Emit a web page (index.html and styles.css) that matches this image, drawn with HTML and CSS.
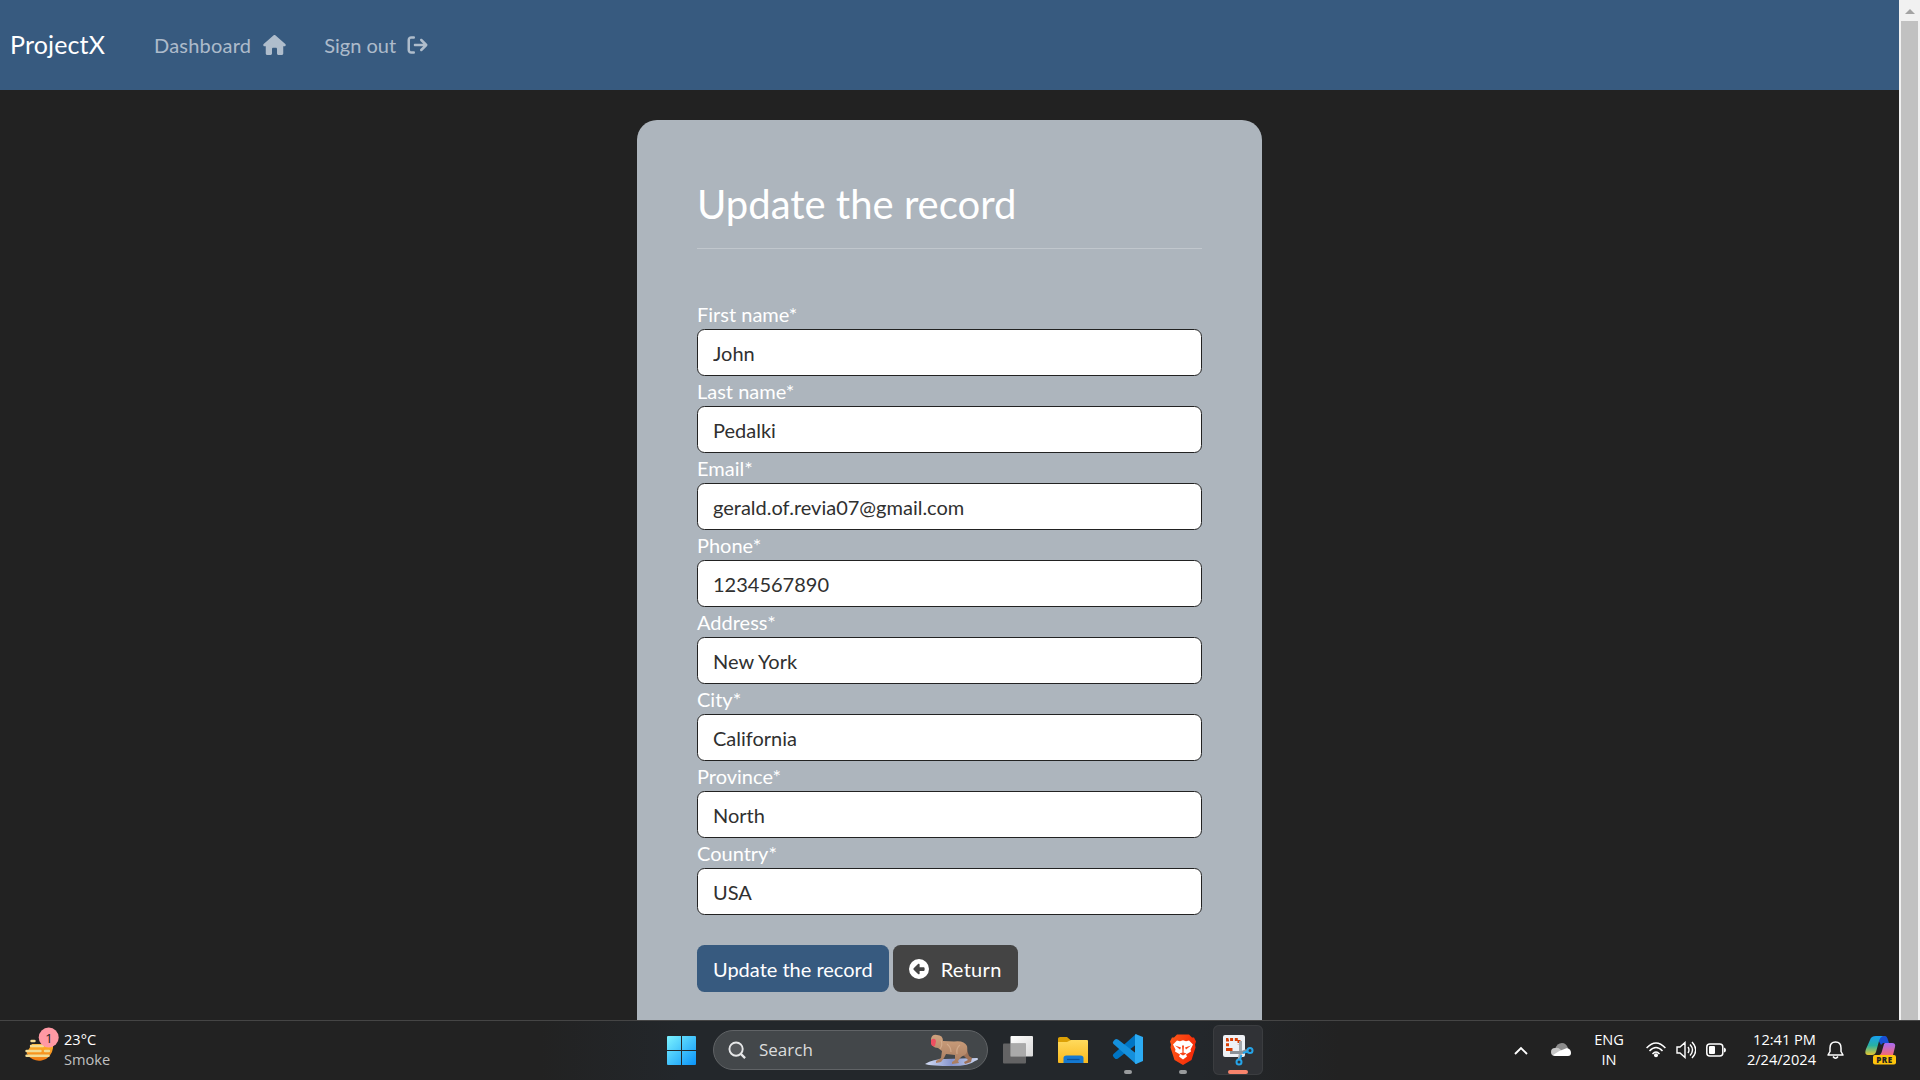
FILE: index.html
```html
<!DOCTYPE html>
<html lang="en">
<head>
<meta charset="utf-8">
<title>ProjectX</title>
<link rel="stylesheet" href="styles.css">
</head>
<body>
<div class="screen">
  <div class="viewport">
    <div class="page">
      <nav class="navbar">
        <a class="brand">ProjectX</a>
        <a class="nav-link dashboard"><span>Dashboard</span>
          <svg class="house" viewBox="0 0 576 512"><path d="M575.800 255.500c0 18-15 32.100-32 32.100h-32l.7 160.200c0 2.700-.2 5.400-.5 8.100V472c0 22.100-17.900 40-40 40H392c-22.100 0-40-17.900-40-40V360c0-17.700-14.300-32-32-32h-64c-17.700 0-32 14.300-32 32v112c0 22.100-17.900 40-40 40h-80c-22.100 0-40-17.900-40-40V287.600H32c-18 0-32-14-32-32.100c0-9 3-17 10-24L266.400 8c7-7 15-8 22-8s15 2 21 7L564.800 231.500c8 7 12 15 11 24z"/></svg>
        </a>
        <a class="nav-link signout"><span>Sign out</span>
          <svg class="exit" viewBox="0 0 512 512"><path d="M502.600 278.600c12.500-12.500 12.500-32.800 0-45.300l-128-128c-12.500-12.500-32.800-12.500-45.300 0s-12.500 32.800 0 45.300L402.700 224H192c-17.700 0-32 14.300-32 32s14.300 32 32 32h210.700l-73.400 73.400c-12.500 12.500-12.500 32.800 0 45.300s32.800 12.500 45.300 0l128-128zM160 96c17.700 0 32-14.300 32-32s-14.300-32-32-32H96C43 32 0 75 0 128v256c0 53 43 96 96 96h64c17.700 0 32-14.300 32-32s-14.300-32-32-32H96c-17.700 0-32-14.300-32-32V128c0-17.700 14.300-32 32-32h64z"/></svg>
        </a>
      </nav>
      <main class="card">
        <h1 class="title">Update the record</h1>
        <hr class="rule">
        <form class="form">
          <label class="label" for="first">First name*</label><input class="input" id="first" value="John">
          <label class="label" for="last">Last name*</label><input class="input" id="last" value="Pedalki">
          <label class="label" for="email">Email*</label><input class="input" id="email" value="gerald.of.revia07@gmail.com">
          <label class="label" for="phone">Phone*</label><input class="input" id="phone" value="1234567890">
          <label class="label" for="address">Address*</label><input class="input" id="address" value="New York">
          <label class="label" for="city">City*</label><input class="input" id="city" value="California">
          <label class="label" for="province">Province*</label><input class="input" id="province" value="North">
          <label class="label" for="country">Country*</label><input class="input" id="country" value="USA">
          <div class="actions">
            <button class="btn primary" type="button">Update the record</button>
            <button class="btn secondary" type="button"><svg class="back" viewBox="0 0 512 512"><path fill-rule="evenodd" d="M512 256A256 256 0 1 0 0 256a256 256 0 1 0 512 0zM231 127c15-15 41-4.500 41 17v64h96c17.700 0 32 14.300 32 32v32c0 17.700-14.300 32-32 32h-96v64c0 21.500-26 32-41 17L119 273c-9.400-9.400-9.400-24.600 0-34z"/></svg>Return</button>
          </div>
        </form>
      </main>
    </div>
    <div class="scrollbar"><span class="scroll-up"></span><span class="thumb"></span></div>
  </div>

  <footer class="taskbar">
    <div class="weather">
      <svg class="weather-icon" viewBox="0 0 36 38">
        <defs><linearGradient id="sun" x2="0" y2="1"><stop stop-color="#ffb52e"/><stop offset="1" stop-color="#f07a13"/></linearGradient></defs>
        <path d="M8 17h21v4a14 14 0 0 1-26.500 5z" fill="url(#sun)"/>
        <g stroke="#f2dc94" stroke-width="2.400" stroke-linecap="round"><path d="M7.500 14h3M7 19h12M2.500 24h14M21 24h4M2.500 28.800h22"/></g>
        <circle cx="24.700" cy="10.500" r="10" fill="#ff99a4"/>
        <text x="25" y="15.500" class="badge-text">1</text>
      </svg>
      <div class="stack"><span>23°C</span><span class="muted">Smoke</span></div>
    </div>

    <div class="apps">
      <svg class="start" viewBox="0 0 29 29"><defs><linearGradient id="win" x2="1" y2="1"><stop stop-color="#7cf3ff"/><stop offset="1" stop-color="#0a93f8"/></linearGradient></defs><path fill="url(#win)" d="M1 0h13v14H0V1q0-1 1-1zM15 0h13q1 0 1 1v13H15zM0 15h14v14H1q-1 0-1-1zM15 15h14v13q0 1-1 1H15z"/></svg>
      <div class="search">
        <svg class="lens" viewBox="0 0 20 20"><circle cx="8.500" cy="8.500" r="7" fill="#55585b" stroke="#e6e7e8" stroke-width="2"/><path d="M13.500 13.500l4.500 4.500" stroke="#e6e7e8" stroke-width="2.400"/></svg>
        <span>Search</span>
        <svg class="monkey" viewBox="0 0 54 32">
          <defs><linearGradient id="fur" x2="0" y2="1"><stop stop-color="#cfa27e"/><stop offset="1" stop-color="#a87c60"/></linearGradient><linearGradient id="ice" x2="1"><stop stop-color="#d5def5"/><stop offset=".5" stop-color="#8795cd"/><stop offset="1" stop-color="#cbd6f0"/></linearGradient></defs>
          <path d="M0 30q8-5 20-5l32-1q3 1-2 3-6 5-22 5Q6 32 0 30z" fill="url(#ice)"/>
          <path d="M34 12l8 4 2 6 3 2-1 4-6 2-1-2 4-2-4-4-6-3z" fill="#9d7157"/>
          <path d="M6 5Q7 0 12 1q6 0 6 6 6 0 11 .500Q39 6 42 12q1 5-1 8l-5 3-3 4 1 2-7 1v-2l3-2v-5l-9-1-2 4-3 4-5 1v-2l5-3 1-7-4-3Q6 14 6 5z" fill="url(#fur)"/>
          <path d="M6 6q4-3 5 1l-1 5q-3 1-4-2z" fill="#ee4f61"/>
          <path d="M16 6q2 5-1 9M22 10q4 3 4 8M35 11q-4 3-3 9" stroke="#e0bb9b" stroke-width="1.200" fill="none" opacity=".6"/>
        </svg>
      </div>
      <svg class="app" viewBox="-2 0 50 50"><defs><linearGradient id="pane" x2="1" y2="1"><stop stop-color="#fff"/><stop offset="1" stop-color="#d8d8d8"/></linearGradient></defs><rect x="15.500" y="11" width="22.500" height="20.500" rx="1" fill="url(#pane)"/><rect x="8" y="18.500" width="23" height="20" rx="1" fill="#6f6f6f" opacity=".85"/><path d="M15.500 18.500H31v13H15.500z" fill="#aaa"/></svg>
      <svg class="app" viewBox="-2 0 50 50"><defs><linearGradient id="folder" x2="0" y2="1"><stop stop-color="#ffda5d"/><stop offset="1" stop-color="#f9b91d"/></linearGradient></defs><path d="M8 15v-1.500q0-1.500 2-1.500h7l4 3.500h11v6H8z" fill="#dca006"/><path d="M8 17h9l4-2h16q1 0 1 1v22H9q-1 0-1-1z" fill="url(#folder)"/><path d="M13.500 38v-5q0-2.500 3-2.500h14q3 0 3 2.500v5z" fill="#1479d2"/><path d="M17 34.500h12.500" stroke="#07519b" stroke-width="1.300"/></svg>
      <svg class="app" viewBox="-2 0 50 50"><path d="M31 9L8.500 29q-1.500 1 0 3l1.500 1.500q1 1 3 0L37 15z" fill="#0075c4"/><path d="M31 39L8.500 19q-1.500-1 0-3l1.500-1.500q1-1 3 0L37 33z" fill="#1590dc"/><path d="M30 9.500l1-.2L38 12V36l-7 3-1-.5z" fill="#2cabf3"/><rect x="19" y="45" width="8" height="4" rx="2" fill="#999b9d"/></svg>
      <svg class="app" viewBox="-2 0 50 50"><defs><linearGradient id="brave" x2="1" y2=".3"><stop stop-color="#ff5a19"/><stop offset="1" stop-color="#f52b08"/></linearGradient></defs><path d="M17 9.500h12l3 3h2l2 4-1 3 .5 3-4 12.500-8.500 5-8.500-5-4-12.500.5-3-1-3 2-4h2z" fill="url(#brave)"/><path d="M17 15.500l3 .7 3-1 3 1 3-.7 4 4-2.500 5 .5 2-5 3 1 2-4 3-4-3 1-2-5-3 .5-2L13 19.500z" fill="#fff"/><path d="M15 20.500l6 2-1 2zM31 20.500l-6 2 1 2zM22 20.500h2l-.5 7 3 1-3.500 2-3.500-2 3-1z" fill="#f94518"/><rect x="19" y="45" width="8" height="4" rx="2" fill="#999b9d"/></svg>
      <svg class="app active" viewBox="0 0 50 50"><rect x="10" y="10" width="22" height="22" rx="2" fill="#eef1f5"/><path d="M14.500 26V14.500H26V20" fill="none" stroke="#d83b01" stroke-width="3" stroke-dasharray="3 1.700"/><path d="M14.500 24.500h5" stroke="#d83b01" stroke-width="3"/><path d="M27.500 16v12L26 35" fill="none" stroke="#a4a9ae" stroke-width="3"/><path d="M17 27.500h12l5-2" fill="none" stroke="#8c9298" stroke-width="3"/><g fill="none" stroke="#25a4e8" stroke-width="2"><circle cx="37" cy="25.500" r="2.500"/><circle cx="26" cy="37" r="2.500"/><path d="M30 28l4.500-1.500M28.500 30L27 34.500"/></g><rect x="15" y="45" width="20" height="4" rx="2" fill="#f7846c"/></svg>
    </div>

    <div class="tray">
      <svg class="chevron" viewBox="0 0 14 9"><path d="M1 8l6-6 6 6" fill="none" stroke="#fff" stroke-width="1.900"/></svg>
      <svg class="cloud" viewBox="0 0 20 14"><path d="M4 6Q6 0 11 0q4 0 6 5l-8 5z" fill="#8c8c8c"/><path d="M4 13Q0 13 0 9t4-4q3-1 6 2l4 5z" fill="#c6c6c6"/><path d="M2 12q7-5 14-7 4 1 4 5 0 3-3 3H4z" fill="#fff"/></svg>
      <div class="stack lang"><span>ENG</span><span>IN</span></div>
      <svg class="wifi" viewBox="0 0 20 16"><g fill="none" stroke="#fff" stroke-width="1.500"><path d="M.6 6q9.400-10 18.800 0M3.500 9q6.500-7 13 0M6.500 12q3.500-4 7 0"/></g><circle cx="10" cy="13.300" r="2" fill="#fff"/></svg>
      <svg class="volume" viewBox="0 0 20 18"><g fill="none" stroke="#fff" stroke-width="1.400"><path d="M1 6h3l5-4.500v15L4 12H1zM12 6q2 3 0 6M14 3.500q5 5.500 0 11M16 1q7.500 8 0 16"/></g></svg>
      <svg class="battery" viewBox="0 0 20 14"><rect x=".8" y="1" width="16" height="12" rx="3" fill="none" stroke="#fff" stroke-width="1.500"/><rect x="3" y="3" width="6" height="8" rx="1" fill="#fff"/><path d="M18 4.500q2 .5 2 2.500t-2 2.500z" fill="#fff"/></svg>
      <div class="stack clock"><span>12:41 PM</span><span>2/24/2024</span></div>
      <svg class="bell" viewBox="0 0 17 19"><path d="M1 14l2-3.500V7q0-6 5.500-6T14 7v3.500l2 3.500zM6 15.500q2.500 3.500 5 0" fill="none" stroke="#fff" stroke-width="1.500" stroke-linejoin="round"/></svg>
      <svg class="copilot" viewBox="0 0 32 30">
        <defs><linearGradient id="c1" x2="0" y2="1"><stop stop-color="#17a0f0"/><stop offset=".5" stop-color="#28b1a3"/><stop offset="1" stop-color="#e8c72e"/></linearGradient><linearGradient id="c2" x2="0" y2="1"><stop stop-color="#a86bf5"/><stop offset="1" stop-color="#f56a75"/></linearGradient></defs>
        <path d="M11 1h9q2 0 3 4l1 3h-6l-2 2z" fill="#184fd4"/>
        <path d="M11 1h7q-3 1-4 5l-3 11q-1 3-4 3H3q-4 0-2-6L5 5q1-4 6-4z" fill="url(#c1)"/>
        <path d="M20 8h7q4 0 3 4l-2 8H14q2 0 3-4l2-7z" fill="url(#c2)"/>
        <rect x="8" y="20" width="23" height="9.500" rx="2" fill="#ffc40c"/><text x="19.500" y="27.700" class="pre-text">PRE</text>
      </svg>
    </div>
  </footer>
</div>
</body>
</html>
```
FILE: styles.css
```css
* { box-sizing: border-box; }
body { margin: 0; background: #222; font-family: Lato, sans-serif; font-size: 20px; line-height: 30px; color: #fff; }
svg { display: block; flex: none; }
.screen { width: 1920px; height: 1080px; overflow: hidden; display: flex; flex-direction: column; }
.viewport { flex: 1; min-height: 0; display: flex; overflow: hidden; }
.page { flex: 1; overflow: hidden; }

.navbar { height: 90px; background: #375a7f; display: flex; align-items: center; padding: 0 0 2px 10px; }
.brand { font-size: 25px; letter-spacing: .15px; margin-right: 49px; }
.nav-link { color: rgba(255, 255, 255, .6); display: flex; align-items: center; gap: 12px; padding-top: 2px; }
.dashboard { margin-right: 38px; letter-spacing: .2px; }
.signout { gap: 11px; }
.house { width: 23px; height: 20px; fill: currentColor; }
.exit { width: 21px; height: 20px; fill: currentColor; }

.card { width: 625px; height: 1000px; margin: 30px auto 0; padding: 60px; border-radius: 20px; background: #adb5bd; }
.title { margin: 0; font-size: 40px; line-height: 48px; font-weight: 400; }
.rule { margin: 20px 0 50px; border: 0; border-top: 1px solid rgba(255, 255, 255, .25); }
.form { display: flex; flex-direction: column; }
.label { height: 30px; }
.input { width: 100%; height: 47px; padding: 8px 15px; border: 1px solid #222; border-radius: 7.500px; background: #fff; color: #303030; font: 20px/30px Lato, sans-serif; }
.actions { display: flex; gap: 4px; margin-top: 30px; }
.btn { height: 47px; padding: 0 16px; border: 0; border-radius: 7.500px; color: #fff; font: 20px/30px Lato, sans-serif; display: flex; align-items: center; white-space: nowrap; }
.primary { background: #375a7f; }
.secondary { background: #444; letter-spacing: .3px; }
.back { width: 20px; height: 20px; margin-right: 12px; fill: #fff; }

.scrollbar { width: 21px; background: #f1f1f1; display: flex; flex-direction: column; align-items: center; }
.scroll-up { width: 0; height: 0; margin: 9px 0 7px; border: 5px solid transparent; border-top: 0; border-bottom-color: #a3a3a3; }
.thumb { width: 17px; flex: 1; background: #c1c1c1; }

.taskbar { flex: none; height: 60px; padding-bottom: 1px; border-top: 1px solid #454545; background: linear-gradient(90deg, #222 0, #222 540px, #23272b 680px, #23272b 1200px, #222 1340px); display: grid; grid-template-columns: 665px 1fr auto; align-items: center; font: 14.600px/20px "Open Sans", sans-serif; }
.stack { display: flex; flex-direction: column; padding-bottom: 2px; }
.muted { color: #c0c0c0; }
.weather { display: flex; align-items: center; }
.weather-icon { width: 36px; height: 38px; margin: -8px 4px 0 24px; }
.badge-text { font: 13px "Open Sans", sans-serif; text-anchor: middle; fill: #222; }
.apps { display: flex; align-items: center; }
.start { width: 29px; height: 29px; margin: 0 17px 0 2px; }
.search { width: 275px; height: 40px; margin-right: 5px; padding: 0 8px 0 14px; border: 1px solid #606366; border-radius: 20px; background: #43474a; color: #dcdddd; display: flex; align-items: center; font-size: 17px; }
.lens { width: 19px; height: 19px; margin-right: 12px; }
.monkey { width: 54px; height: 32px; margin-left: auto; }
.app { width: 50px; height: 50px; margin-right: 5px; }
.active { background: #303236; border-radius: 6px; box-shadow: inset 0 0 0 1px #3b3d40; margin-right: 0; }
.tray { display: flex; align-items: center; }
.chevron { width: 14px; height: 9px; margin-right: 23px; }
.cloud { width: 20px; height: 14px; margin-right: 23px; }
.lang { width: 30px; align-items: center; margin-right: 22px; }
.wifi { width: 20px; height: 16px; margin-right: 10px; }
.volume { width: 20px; height: 18px; margin-right: 10px; }
.battery { width: 20px; height: 14px; margin-right: 10px; }
.clock { width: 80px; align-items: flex-end; margin-right: 11px; }
.bell { width: 17px; height: 19px; margin-right: 21px; }
.copilot { width: 32px; height: 30px; margin-right: 23px; }
.pre-text { font: 800 8px "Open Sans", sans-serif; text-anchor: middle; fill: #222; letter-spacing: .5px; }
```
